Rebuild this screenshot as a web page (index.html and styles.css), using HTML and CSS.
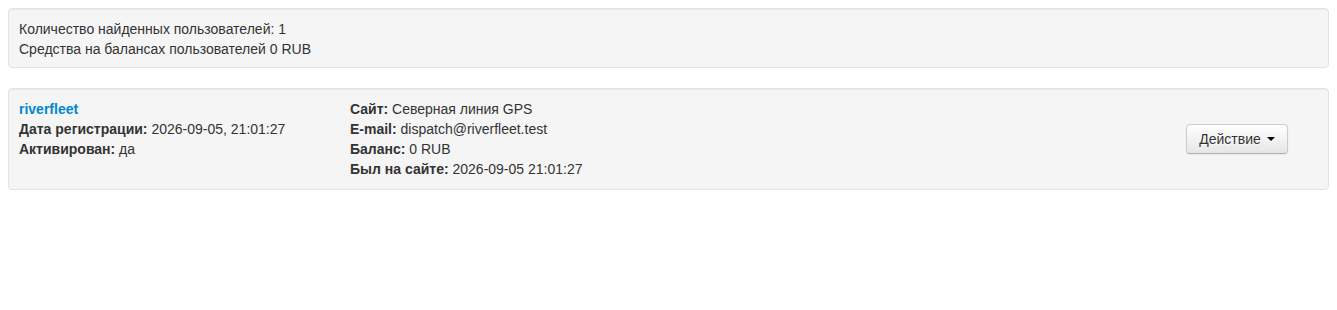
FILE: index.html
```html
<!DOCTYPE html>
<html lang="ru">
<head>
<meta charset="utf-8">
<link rel="stylesheet" href="styles.css">
</head>
<body>
<div class="well">
  <div>Количество найденных пользователей: 1</div>
  <div>Средства на балансах пользователей 0 RUB</div>
</div>
<div class="well user">
  <div class="col col-main">
    <div><a class="login" href="#">riverfleet</a></div>
    <div><b>Дата регистрации:</b> 2026-09-05, 21:01:27</div>
    <div><b>Активирован:</b> да</div>
  </div>
  <div class="col col-info">
    <div><b>Сайт:</b> Северная линия GPS</div>
    <div><b>E-mail:</b> dispatch@riverfleet.test</div>
    <div><b>Баланс:</b> 0 RUB</div>
    <div><b>Был на сайте:</b> 2026-09-05 21:01:27</div>
  </div>
  <div class="col col-action">
    <button class="btn" type="button">Действие <span class="caret"></span></button>
  </div>
</div>
</body>
</html>
```

FILE: styles.css
```css
html, body {
  margin: 0;
  padding: 0;
}
body {
  margin: 8px;
  font-family: "Liberation Sans", Arial, sans-serif;
  font-size: 14px;
  line-height: 20px;
  color: #333333;
  background: #ffffff;
}
.well {
  background-color: #f5f5f5;
  border: 1px solid #e3e3e3;
  border-radius: 4px;
  box-shadow: inset 0 1px 1px rgba(0, 0, 0, 0.05);
  padding: 10px 9px 8px 10px;
  margin-bottom: 20px;
}
.user {
  display: grid;
  grid-template-columns: 331px 1fr auto;
  align-items: start;
  padding-bottom: 10px;
}
.col-action {
  align-self: center;
  padding-right: 31px;
}
b {
  font-weight: bold;
}
.login {
  color: #0088cc;
  font-weight: bold;
  text-decoration: none;
}
.btn {
  display: inline-flex;
  align-items: center;
  font-family: "Liberation Sans", Arial, sans-serif;
  font-size: 14px;
  line-height: 20px;
  color: #333333;
  padding: 4px 12px;
  width: 102px;
  height: 30px;
  justify-content: center;
  border: 1px solid #cccccc;
  border-bottom-color: #b3b3b3;
  border-radius: 4px;
  background-color: #f5f5f5;
  background-image: linear-gradient(to bottom, #ffffff, #e6e6e6);
  box-shadow: inset 0 1px 0 rgba(255, 255, 255, 0.2), 0 1px 2px rgba(0, 0, 0, 0.05);
  text-shadow: 0 1px 1px rgba(255, 255, 255, 0.75);
  cursor: pointer;
  gap: 6px;
}
.caret {
  display: inline-block;
  width: 0;
  height: 0;
  border-top: 4px solid #000000;
  border-left: 4px solid transparent;
  border-right: 4px solid transparent;
}
```
